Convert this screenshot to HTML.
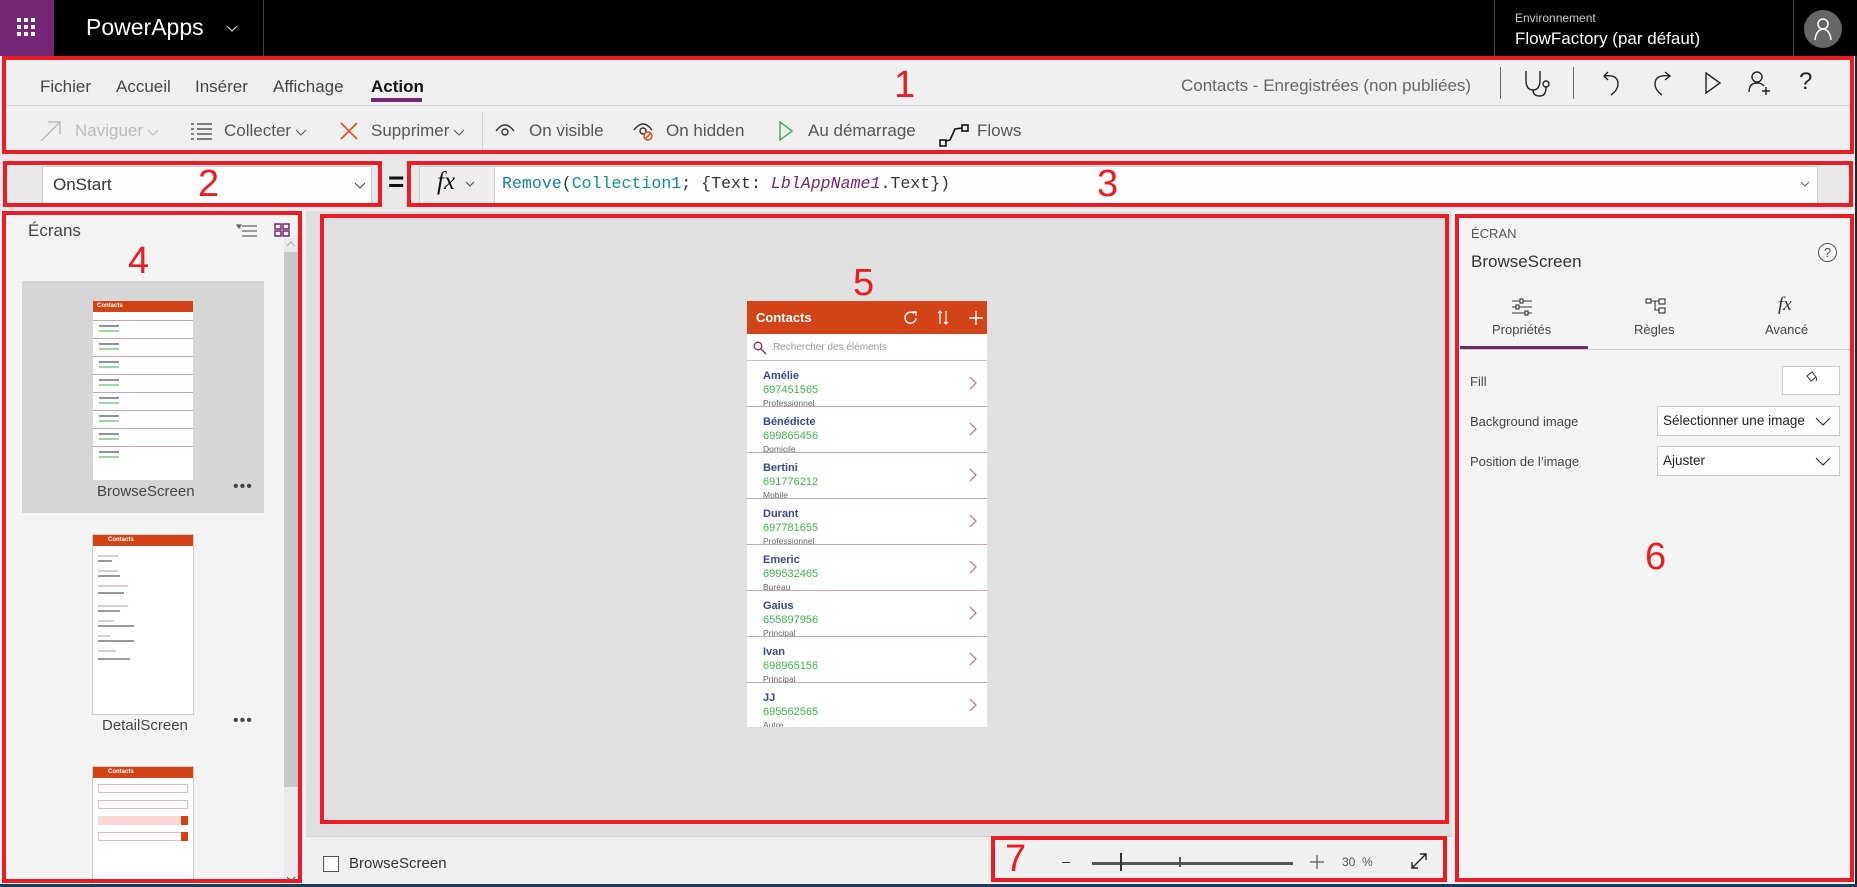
<!DOCTYPE html>
<html><head><meta charset="utf-8"><style>
*{margin:0;padding:0;box-sizing:border-box}
body{width:1857px;height:887px;overflow:hidden;background:#f0f0f0;font-family:"Liberation Sans",sans-serif;position:relative;color:#333}
.a{position:absolute}
.rb{position:absolute;border:4px solid #ed1c24}
.num{position:absolute;color:#ed1c24;font-size:38px;font-family:"Liberation Sans",sans-serif}
.t{position:absolute;white-space:nowrap}
.row{position:absolute;left:0;width:240px;height:46px;border-bottom:1px solid #c9a3b5;background:#fff}
.row .n{position:absolute;left:16px;top:9px;font-size:11px;font-weight:bold;color:#3a4a8a}
.row .p{position:absolute;left:16px;top:23px;font-size:11px;color:#3fb54a}
.row .k{position:absolute;left:16px;top:37px;font-size:8.5px;color:#666}
.row svg{position:absolute;right:10px;top:15px}
.mono{font-family:"Liberation Mono",monospace}
</style></head><body>
<!-- top bar -->
<div class="a" style="left:0;top:0;width:1857px;height:56px;background:#000"></div>
<div class="a" style="left:0;top:0;width:54px;height:56px;background:#742774"></div>
<svg class="a" style="left:17px;top:18px" width="20" height="20"><g fill="#fff"><rect x="0" y="0" width="4" height="4"/><rect x="7" y="0" width="4" height="4"/><rect x="14" y="0" width="4" height="4"/><rect x="0" y="7" width="4" height="4"/><rect x="7" y="7" width="4" height="4"/><rect x="14" y="7" width="4" height="4"/><rect x="0" y="14" width="4" height="4"/><rect x="7" y="14" width="4" height="4"/><rect x="14" y="14" width="4" height="4"/></g></svg>
<div class="t" style="left:86px;top:14px;font-size:23px;color:#fff">PowerApps</div>
<svg class="a" style="left:226px;top:25px" width="12" height="8"><path d="M1 1L6 6L11 1" stroke="#ccc" fill="none" stroke-width="1.2"/></svg>
<div class="a" style="left:263px;top:0;width:1px;height:56px;background:#444"></div>
<div class="a" style="left:1494px;top:0;width:1px;height:56px;background:#444"></div>
<div class="a" style="left:1793px;top:0;width:1px;height:56px;background:#444"></div>
<div class="t" style="left:1515px;top:11px;font-size:12px;color:#ccc">Environnement</div>
<div class="t" style="left:1515px;top:29px;font-size:17px;color:#fff">FlowFactory (par défaut)</div>
<div class="a" style="left:1804px;top:10px;width:38px;height:38px;border-radius:50%;background:#666"></div>
<svg class="a" style="left:1813px;top:16px" width="20" height="26"><circle cx="10" cy="8" r="5" stroke="#fff" fill="none" stroke-width="1.5"/><path d="M2 24 Q3 14 10 13 Q17 14 18 24" stroke="#fff" fill="none" stroke-width="1.5"/></svg>

<!-- ribbon -->
<div class="a" style="left:0;top:56px;width:1857px;height:98px;background:#f0f0f0"></div>
<div class="t" style="left:40px;top:77px;font-size:17px;color:#444">Fichier</div>
<div class="t" style="left:116px;top:77px;font-size:17px;color:#444">Accueil</div>
<div class="t" style="left:195px;top:77px;font-size:17px;color:#444">Insérer</div>
<div class="t" style="left:273px;top:77px;font-size:17px;color:#444">Affichage</div>
<div class="t" style="left:371px;top:77px;font-size:17px;color:#111;font-weight:bold">Action</div>
<div class="a" style="left:371px;top:98px;width:51px;height:4px;background:#742774"></div>
<div class="a" style="left:6px;top:105px;width:1846px;height:1px;background:#d6d6d6"></div>
<div class="t" style="left:1181px;top:76px;font-size:17px;color:#666">Contacts - Enregistrées (non publiées)</div>
<div class="a" style="left:1500px;top:67px;width:1px;height:32px;background:#666"></div>
<div class="a" style="left:1573px;top:67px;width:1px;height:32px;background:#666"></div>
<svg class="a" style="left:1522px;top:70px" width="30" height="28" fill="none" stroke="#222" stroke-width="1.4"><path d="M4 1V10Q4 20 11 20Q18 20 18 10V1"/><path d="M11 20Q11 26 18 26Q24 26 24 17"/><circle cx="24" cy="14" r="3"/></svg>
<svg class="a" style="left:1602px;top:70px" width="22" height="26" fill="none" stroke="#222" stroke-width="1.4"><path d="M6 2L2 6L6 10"/><path d="M2 6Q16 4 16 14Q16 20 9 25"/></svg>
<svg class="a" style="left:1651px;top:70px" width="22" height="26" fill="none" stroke="#222" stroke-width="1.4"><path d="M14 2L19 6L14 10"/><path d="M19 6Q4 4 4 14Q4 20 11 25"/></svg>
<svg class="a" style="left:1704px;top:72px" width="18" height="22" fill="none" stroke="#222" stroke-width="1.4"><path d="M2 1L16 11L2 21Z"/></svg>
<svg class="a" style="left:1747px;top:70px" width="24" height="26" fill="none" stroke="#222" stroke-width="1.4"><circle cx="10" cy="7" r="5"/><path d="M2 22Q2 13 10 13Q15 13 17 16"/><path d="M19 17V25M15 21H23"/></svg>
<div class="t" style="left:1799px;top:68px;font-size:24px;color:#222">?</div>

<!-- command row -->
<svg class="a" style="left:40px;top:120px" width="22" height="22" stroke="#bbb" fill="none" stroke-width="1.4"><path d="M1 21L20 2M8 2H20V14"/></svg>
<div class="t" style="left:75px;top:121px;font-size:17px;color:#bbb">Naviguer</div>
<svg class="a" style="left:147px;top:129px" width="12" height="8"><path d="M1 1L6 6L11 1" stroke="#bbb" fill="none"/></svg>
<svg class="a" style="left:191px;top:122px" width="22" height="18" stroke="#555" stroke-width="1.5"><path d="M0 2H3M6 2H21M0 7H3M6 7H21M0 12H3M6 12H21M0 17H3M6 17H21"/></svg>
<div class="t" style="left:224px;top:121px;font-size:17px;color:#555">Collecter</div>
<svg class="a" style="left:295px;top:129px" width="12" height="8"><path d="M1 1L6 6L11 1" stroke="#555" fill="none"/></svg>
<svg class="a" style="left:340px;top:122px" width="18" height="18" stroke="#e8491d" stroke-width="1.6"><path d="M1 1L17 17M17 1L1 17"/></svg>
<div class="t" style="left:371px;top:121px;font-size:17px;color:#555">Supprimer</div>
<svg class="a" style="left:453px;top:129px" width="12" height="8"><path d="M1 1L6 6L11 1" stroke="#555" fill="none"/></svg>
<div class="a" style="left:482px;top:112px;width:1px;height:38px;background:#d6d6d6"></div>
<svg class="a" style="left:494px;top:121px" width="22" height="18" fill="none" stroke="#333" stroke-width="1.4"><path d="M2 10Q11 -2 20 10"/><circle cx="11" cy="11" r="3"/></svg>
<div class="t" style="left:529px;top:121px;font-size:17px;color:#555">On visible</div>
<svg class="a" style="left:632px;top:120px" width="24" height="22" fill="none" stroke="#333" stroke-width="1.4"><path d="M2 10Q11 -2 20 10"/><circle cx="11" cy="11" r="3"/><circle cx="16" cy="16" r="4" stroke="#e8491d"/><path d="M13 19L19 13" stroke="#e8491d"/></svg>
<div class="t" style="left:666px;top:121px;font-size:17px;color:#555">On hidden</div>
<svg class="a" style="left:778px;top:121px" width="16" height="20" fill="none" stroke="#3aa655" stroke-width="1.4"><path d="M2 1L14 10L2 19Z"/></svg>
<div class="t" style="left:808px;top:121px;font-size:17px;color:#555">Au démarrage</div>
<svg class="a" style="left:939px;top:124px" width="32" height="24" fill="none" stroke="#111" stroke-width="1.6"><rect x="1" y="16" width="6" height="6"/><rect x="23" y="1" width="6" height="6"/><path d="M7 17L11 16L16 5L23 4"/></svg>
<div class="t" style="left:977px;top:121px;font-size:17px;color:#555">Flows</div>
<div class="rb" style="left:2px;top:56px;width:1852px;height:98px"></div>
<div class="num" style="left:894px;top:64px">1</div>

<!-- formula row -->
<div class="a" style="left:0;top:154px;width:1857px;height:56px;background:#e8e8e8"></div>
<div class="a" style="left:42px;top:166px;width:330px;height:38px;background:#fff;border:1px solid #ccc"></div>
<div class="t" style="left:53px;top:175px;font-size:17px;color:#333">OnStart</div>
<svg class="a" style="left:354px;top:182px" width="12" height="8"><path d="M1 1L6 6L11 1" stroke="#444" fill="none"/></svg>
<div class="rb" style="left:3px;top:161px;width:379px;height:46px"></div>
<div class="num" style="left:198px;top:163px">2</div>
<div class="t" style="left:388px;top:166px;font-size:28px;color:#111;font-weight:bold">=</div>
<div class="a" style="left:419px;top:166px;width:76px;height:38px;background:#eee;border:1px solid #ccc"></div>
<div class="t" style="left:437px;top:168px;font-size:25px;color:#111;font-family:'Liberation Serif',serif;font-style:italic">fx</div>
<svg class="a" style="left:465px;top:181px" width="10" height="7"><path d="M1 1L5 5L9 1" stroke="#444" fill="none"/></svg>
<div class="a" style="left:495px;top:166px;width:1323px;height:38px;background:#fff;border:1px solid #ccc;border-left:none"></div>
<div class="t mono" style="left:502px;top:174px;font-size:16.6px;color:#333"><span style="color:#1a7ab8">Remove</span>(<span style="color:#119188">Collection1</span>; {Text: <i style="color:#742774">LblAppName1</i>.Text})</div>
<svg class="a" style="left:1800px;top:181px" width="10" height="7"><path d="M1 1L5 5L9 1" stroke="#666" fill="none"/></svg>
<div class="rb" style="left:407px;top:161px;width:1446px;height:46px"></div>
<div class="num" style="left:1097px;top:163px">3</div>

<!-- left panel -->
<div class="a" style="left:0;top:210px;width:302px;height:677px;background:#f4f4f4"></div>
<div class="t" style="left:28px;top:221px;font-size:17px;color:#444">Écrans</div>
<svg class="a" style="left:236px;top:224px" width="22" height="14" stroke="#666" stroke-width="1.2"><path d="M6 2H21M6 7H21M6 12H21"/><path d="M1 1H5L3 4Z" fill="#666"/></svg>
<svg class="a" style="left:274px;top:223px" width="17" height="15" fill="none" stroke="#742774" stroke-width="1.5"><rect x="1" y="1" width="6" height="5"/><rect x="9" y="1" width="6" height="5"/><rect x="1" y="8" width="6" height="5"/><rect x="9" y="8" width="6" height="5"/></svg>
<div class="a" style="left:284px;top:238px;width:15px;height:648px;background:#eaeaea"></div>
<div class="a" style="left:284px;top:252px;width:15px;height:535px;background:#c8c8c8"></div>
<svg class="a" style="left:286px;top:241px" width="10" height="6"><path d="M1 5L5 1L9 5" stroke="#aaa" fill="none"/></svg>
<svg class="a" style="left:286px;top:876px" width="10" height="6"><path d="M1 1L5 5L9 1" stroke="#555" fill="none"/></svg>
<div class="a" style="left:22px;top:281px;width:242px;height:232px;background:#d6d6d6"></div>
<!-- thumb 1 -->
<div class="a" style="left:93px;top:301px;width:100px;height:179px;background:#fff">
 <div class="a" style="left:0;top:0;width:100px;height:11px;background:#d24418"></div>
 <div class="t" style="left:4px;top:2px;font-size:6px;color:#fff;font-weight:bold">Contacts</div>
 <div class="a" style="left:0;top:19px;width:100px;height:1px;background:#c9a3b5"></div>
 <div class="a" style="left:0;top:37px;width:100px;height:1px;background:#c9a3b5"></div>
 <div class="a" style="left:0;top:55px;width:100px;height:1px;background:#c9a3b5"></div>
 <div class="a" style="left:0;top:73px;width:100px;height:1px;background:#c9a3b5"></div>
 <div class="a" style="left:0;top:91px;width:100px;height:1px;background:#c9a3b5"></div>
 <div class="a" style="left:0;top:109px;width:100px;height:1px;background:#c9a3b5"></div>
 <div class="a" style="left:0;top:127px;width:100px;height:1px;background:#c9a3b5"></div>
 <div class="a" style="left:0;top:145px;width:100px;height:1px;background:#c9a3b5"></div>
 <div class="a" style="left:6px;top:24px;width:20px;height:2px;background:#8890b8"></div><div class="a" style="left:6px;top:29px;width:20px;height:2px;background:#9cd8a0"></div>
 <div class="a" style="left:6px;top:42px;width:20px;height:2px;background:#8890b8"></div><div class="a" style="left:6px;top:47px;width:20px;height:2px;background:#9cd8a0"></div>
 <div class="a" style="left:6px;top:60px;width:20px;height:2px;background:#8890b8"></div><div class="a" style="left:6px;top:65px;width:20px;height:2px;background:#9cd8a0"></div>
 <div class="a" style="left:6px;top:78px;width:20px;height:2px;background:#8890b8"></div><div class="a" style="left:6px;top:83px;width:20px;height:2px;background:#9cd8a0"></div>
 <div class="a" style="left:6px;top:96px;width:20px;height:2px;background:#8890b8"></div><div class="a" style="left:6px;top:101px;width:20px;height:2px;background:#9cd8a0"></div>
 <div class="a" style="left:6px;top:114px;width:20px;height:2px;background:#8890b8"></div><div class="a" style="left:6px;top:119px;width:20px;height:2px;background:#9cd8a0"></div>
 <div class="a" style="left:6px;top:132px;width:20px;height:2px;background:#8890b8"></div><div class="a" style="left:6px;top:137px;width:20px;height:2px;background:#9cd8a0"></div>
 <div class="a" style="left:6px;top:150px;width:20px;height:2px;background:#8890b8"></div><div class="a" style="left:6px;top:155px;width:20px;height:2px;background:#9cd8a0"></div>
</div>
<div class="t" style="left:97px;top:483px;font-size:15px;color:#444">BrowseScreen</div>
<div class="t" style="left:233px;top:478px;font-size:16px;color:#444;letter-spacing:1px">•••</div>
<!-- thumb 2 -->
<div class="a" style="left:92px;top:534px;width:102px;height:181px;background:#fff;border:1px solid #ccc">
 <div class="a" style="left:0;top:0;width:100px;height:11px;background:#d24418"></div>
 <div class="t" style="left:15px;top:2px;font-size:6px;color:#fff;font-weight:bold">Contacts</div>
 <div class="a" style="left:5px;top:20px;width:20px;height:2px;background:#dcc"></div>
 <div class="a" style="left:5px;top:25px;width:14px;height:2px;background:#999"></div>
 <div class="a" style="left:5px;top:35px;width:20px;height:2px;background:#dcc"></div>
 <div class="a" style="left:5px;top:40px;width:22px;height:2px;background:#999"></div>
 <div class="a" style="left:5px;top:50px;width:30px;height:2px;background:#dcc"></div>
 <div class="a" style="left:5px;top:57px;width:26px;height:2px;background:#999"></div>
 <div class="a" style="left:5px;top:70px;width:30px;height:2px;background:#dcc"></div>
 <div class="a" style="left:5px;top:75px;width:22px;height:2px;background:#999"></div>
 <div class="a" style="left:5px;top:85px;width:16px;height:2px;background:#dcc"></div>
 <div class="a" style="left:5px;top:90px;width:36px;height:2px;background:#999"></div>
 <div class="a" style="left:5px;top:100px;width:12px;height:2px;background:#dcc"></div>
 <div class="a" style="left:5px;top:105px;width:36px;height:2px;background:#999"></div>
 <div class="a" style="left:5px;top:115px;width:18px;height:2px;background:#dcc"></div>
 <div class="a" style="left:5px;top:123px;width:32px;height:2px;background:#999"></div>
</div>
<div class="t" style="left:102px;top:717px;font-size:15px;color:#444">DetailScreen</div>
<div class="t" style="left:233px;top:712px;font-size:16px;color:#444;letter-spacing:1px">•••</div>
<!-- thumb 3 -->
<div class="a" style="left:92px;top:766px;width:102px;height:120px;background:#fff;border:1px solid #ccc">
 <div class="a" style="left:0;top:0;width:100px;height:11px;background:#d24418"></div>
 <div class="t" style="left:15px;top:2px;font-size:6px;color:#fff;font-weight:bold">Contacts</div>
 <div class="a" style="left:5px;top:17px;width:90px;height:9px;border:1px solid #e8b5c0"></div>
 <div class="a" style="left:5px;top:33px;width:90px;height:9px;border:1px solid #e8b5c0"></div>
 <div class="a" style="left:5px;top:49px;width:90px;height:9px;background:#f8d8d0"></div>
 <div class="a" style="left:88px;top:49px;width:7px;height:9px;background:#d24418"></div>
 <div class="a" style="left:5px;top:65px;width:90px;height:9px;border:1px solid #e8b5c0"></div>
 <div class="a" style="left:88px;top:65px;width:7px;height:9px;background:#d24418"></div>
</div>
<div class="rb" style="left:2px;top:211px;width:300px;height:672px"></div>
<div class="num" style="left:128px;top:240px">4</div>

<!-- canvas -->
<div class="a" style="left:306px;top:211px;width:1146px;height:627px;background:#e0e0e0"></div>
<div class="a" style="left:306px;top:836px;width:1146px;height:51px;background:#f0f0f0;border-top:1px solid #d0d0d0"></div>
<div class="a" style="left:747px;top:301px;width:240px;height:426px;background:#fff;overflow:hidden">
 <div class="a" style="left:0;top:0;width:240px;height:33px;background:#d24418"></div>
 <div class="t" style="left:9px;top:9px;font-size:13px;color:#fff;font-weight:bold">Contacts</div>
 <svg class="a" style="left:156px;top:9px" width="16" height="16" fill="none" stroke="#fff" stroke-width="1.4"><path d="M13 8A5.5 5.5 0 1 1 11 3.5"/><path d="M9 2H13V6"/></svg>
 <svg class="a" style="left:190px;top:9px" width="12" height="16" fill="none" stroke="#fff" stroke-width="1.2"><path d="M3 1V14M1 3L3 1L5 3M9 1V14M7 12L9 14L11 12"/></svg>
 <svg class="a" style="left:222px;top:10px" width="14" height="14" stroke="#fff" stroke-width="1.4"><path d="M7 0V14M0 7H14"/></svg>
 <svg class="a" style="left:6px;top:40px" width="14" height="14" fill="none" stroke="#8a2a5a" stroke-width="1.3"><circle cx="5" cy="5" r="3.8"/><path d="M8 8L13 13"/></svg>
 <div class="t" style="left:26px;top:41px;font-size:10px;color:#999">Rechercher des éléments</div>
 <div class="a" style="left:0;top:59px;width:240px;height:1px;background:#d0b8c5"></div>
 <div class="row" style="top:60px"><div class="n">Amélie</div><div class="p">697451565</div><div class="k">Professionnel</div><svg width="8" height="14"><path d="M1 1L7 7L1 13" stroke="#b86a90" fill="none" stroke-width="1.2"/></svg></div>
 <div class="row" style="top:106px"><div class="n">Bénédicte</div><div class="p">699865456</div><div class="k">Domicile</div><svg width="8" height="14"><path d="M1 1L7 7L1 13" stroke="#b86a90" fill="none" stroke-width="1.2"/></svg></div>
 <div class="row" style="top:152px"><div class="n">Bertini</div><div class="p">691776212</div><div class="k">Mobile</div><svg width="8" height="14"><path d="M1 1L7 7L1 13" stroke="#b86a90" fill="none" stroke-width="1.2"/></svg></div>
 <div class="row" style="top:198px"><div class="n">Durant</div><div class="p">697781655</div><div class="k">Professionnel</div><svg width="8" height="14"><path d="M1 1L7 7L1 13" stroke="#b86a90" fill="none" stroke-width="1.2"/></svg></div>
 <div class="row" style="top:244px"><div class="n">Emeric</div><div class="p">699532465</div><div class="k">Bureau</div><svg width="8" height="14"><path d="M1 1L7 7L1 13" stroke="#b86a90" fill="none" stroke-width="1.2"/></svg></div>
 <div class="row" style="top:290px"><div class="n">Gaius</div><div class="p">655897956</div><div class="k">Principal</div><svg width="8" height="14"><path d="M1 1L7 7L1 13" stroke="#b86a90" fill="none" stroke-width="1.2"/></svg></div>
 <div class="row" style="top:336px"><div class="n">Ivan</div><div class="p">698965156</div><div class="k">Principal</div><svg width="8" height="14"><path d="M1 1L7 7L1 13" stroke="#b86a90" fill="none" stroke-width="1.2"/></svg></div>
 <div class="row" style="top:382px;border:none"><div class="n">JJ</div><div class="p">695562565</div><div class="k">Autre...</div><svg width="8" height="14"><path d="M1 1L7 7L1 13" stroke="#b86a90" fill="none" stroke-width="1.2"/></svg></div>
</div>
<div class="rb" style="left:320px;top:214px;width:1129px;height:610px"></div>
<div class="num" style="left:853px;top:262px">5</div>
<div class="a" style="left:323px;top:856px;width:16px;height:16px;border:1px solid #555;background:#fff"></div>
<div class="t" style="left:349px;top:855px;font-size:15px;color:#333">BrowseScreen</div>
<div class="a" style="left:1062px;top:862px;width:8px;height:1px;background:#333"></div>
<div class="a" style="left:1092px;top:862px;width:201px;height:3px;background:#555"></div>
<div class="a" style="left:1120px;top:853px;width:2px;height:18px;background:#333"></div>
<div class="a" style="left:1179px;top:857px;width:2px;height:10px;background:#555"></div>
<svg class="a" style="left:1310px;top:855px" width="14" height="14" stroke="#555" stroke-width="1.2"><path d="M7 0V14M0 7H14"/></svg>
<div class="t" style="left:1342px;top:855px;font-size:12px;color:#555">30 &nbsp;%</div>
<svg class="a" style="left:1410px;top:852px" width="18" height="18" fill="none" stroke="#222" stroke-width="1.4"><path d="M2 16L16 2M2 10V16H8M10 2H16V8"/></svg>
<div class="rb" style="left:991px;top:836px;width:456px;height:46px"></div>
<div class="num" style="left:1005px;top:838px">7</div>

<!-- right panel -->
<div class="a" style="left:1452px;top:210px;width:405px;height:677px;background:#f4f4f4"></div>
<div class="t" style="left:1471px;top:226px;font-size:13px;color:#555">ÉCRAN</div>
<div class="t" style="left:1471px;top:252px;font-size:17px;color:#333">BrowseScreen</div>
<div class="a" style="left:1818px;top:243px;width:19px;height:19px;border:1px solid #555;border-radius:50%;font-size:13px;text-align:center;line-height:17px;color:#555">?</div>
<svg class="a" style="left:1511px;top:298px" width="22" height="18" stroke="#333" stroke-width="1.1" fill="#f4f4f4"><path d="M1 3H21M1 9H21M1 15H21"/><rect x="9" y="1" width="3" height="4"/><rect x="5" y="7" width="3" height="4"/><rect x="14" y="13" width="3" height="4"/></svg>
<div class="t" style="left:1492px;top:322px;font-size:13px;color:#444">Propriétés</div>
<svg class="a" style="left:1645px;top:298px" width="22" height="16" fill="none" stroke="#333" stroke-width="1.1"><rect x="1" y="1" width="5" height="4"/><rect x="14" y="1" width="6" height="5"/><rect x="14" y="10" width="6" height="5"/><path d="M6 3H14M10 3V12H14"/></svg>
<div class="t" style="left:1634px;top:322px;font-size:13px;color:#444">Règles</div>
<div class="t" style="left:1778px;top:294px;font-size:19px;color:#333;font-family:'Liberation Serif',serif;font-style:italic">fx</div>
<div class="t" style="left:1765px;top:322px;font-size:13px;color:#444">Avancé</div>
<div class="a" style="left:1460px;top:349px;width:393px;height:1px;background:#ccc"></div>
<div class="a" style="left:1460px;top:346px;width:128px;height:3px;background:#742774"></div>
<div class="t" style="left:1470px;top:374px;font-size:13px;color:#444">Fill</div>
<div class="a" style="left:1782px;top:366px;width:58px;height:29px;background:#fff;border:1px solid #ccc"></div>
<svg class="a" style="left:1804px;top:370px" width="14" height="14" fill="none" stroke="#333" stroke-width="1"><path d="M3 6L8 2L12 7L7 11Z"/><path d="M12 7Q13 10 12 11"/></svg>
<div class="t" style="left:1470px;top:414px;font-size:13px;color:#444">Background image</div>
<div class="a" style="left:1657px;top:406px;width:183px;height:30px;background:#fff;border:1px solid #ccc;overflow:hidden"><div class="t" style="left:5px;top:6px;font-size:13.5px;color:#222">Sélectionner une image</div><div class="a" style="left:155px;top:0;width:28px;height:28px;background:#fff"></div></div>
<svg class="a" style="left:1815px;top:417px" width="16" height="9"><path d="M1 1L8 8L15 1" stroke="#333" fill="none" stroke-width="1.2"/></svg>
<div class="t" style="left:1470px;top:454px;font-size:13px;color:#444">Position de l’image</div>
<div class="a" style="left:1657px;top:446px;width:183px;height:30px;background:#fff;border:1px solid #ccc"><div class="t" style="left:5px;top:6px;font-size:13.5px;color:#222">Ajuster</div></div>
<svg class="a" style="left:1815px;top:457px" width="16" height="9"><path d="M1 1L8 8L15 1" stroke="#333" fill="none" stroke-width="1.2"/></svg>
<div class="rb" style="left:1455px;top:214px;width:399px;height:668px"></div>
<div class="num" style="left:1645px;top:536px">6</div>
<div class="a" style="left:1855px;top:56px;width:2px;height:831px;background:#222"></div>
<div class="a" style="left:0;top:884px;width:1857px;height:3px;background:#1b3a5c"></div>
</body></html>
